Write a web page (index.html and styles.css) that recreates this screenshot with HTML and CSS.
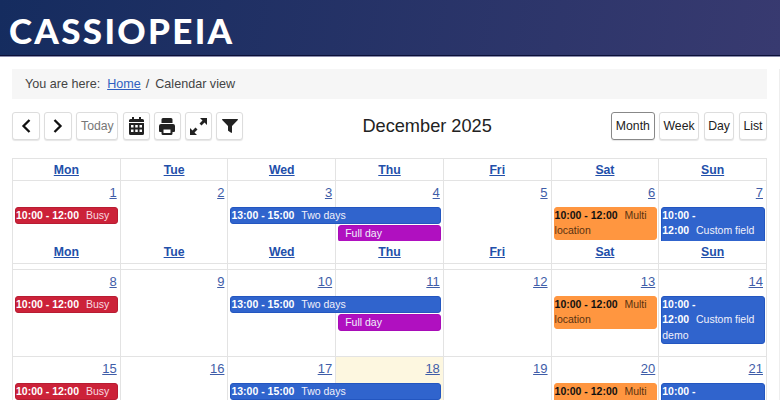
FILE: index.html
```html
<!DOCTYPE html>
<html lang="en">
<head>
  <meta charset="UTF-8">
  <meta name="viewport" content="width=device-width, initial-scale=1">
  <title>Calendar view | Cassiopeia</title>
  <link rel="stylesheet" href="styles.css">
</head>
<body>
  <div class="site-header">
    <a class="logo" href="#">CASSIOPEIA</a>
  </div>

  <div class="container">
    <div class="breadcrumb">
      <span class="here">You are here:</span>
      <a href="#">Home</a>
      <span class="sep">/</span>
      <span>Calendar view</span>
    </div>

    <div class="toolbar">
      <div class="btn-group">
        <button class="btn btn-nav" aria-label="Previous"><svg width="14" height="18" viewBox="0 0 14 18"><path d="M10.500 3 4.500 9l6 6" fill="none" stroke="#111" stroke-width="2.300"/></svg></button>
        <button class="btn btn-nav" aria-label="Next"><svg width="14" height="18" viewBox="0 0 14 18"><path d="M3.500 3l6 6-6 6" fill="none" stroke="#111" stroke-width="2.300"/></svg></button>
        <button class="btn btn-today">Today</button>
        <button class="btn btn-icon" aria-label="Jump to date"><svg width="15" height="18" viewBox="0 0 15 18"><path fill="#222" fill-rule="evenodd" d="M3 0h2v2h5V0h2v2h1.500A1.500 1.500 0 0 1 15 3.500V5H0V3.500A1.500 1.500 0 0 1 1.500 2H3zM0 6h15v10.500a1.500 1.500 0 0 1-1.500 1.500h-12A1.500 1.500 0 0 1 0 16.500zM2 8v2.500h2.500V8zm4.250 0v2.500h2.500V8zm4.250 0v2.500H13V8zM2 12.500V15h2.500v-2.500zm4.250 0V15h2.500v-2.500zm4.250 0V15H13v-2.500z"/></svg></button>
        <button class="btn btn-icon" aria-label="Print"><svg width="16" height="17" viewBox="0 0 16 17"><path fill="#222" fill-rule="evenodd" d="M2.500 1.500A1.500 1.500 0 0 1 4 0h8a1.500 1.500 0 0 1 1.500 1.500V5h-11zM2 6h12a2 2 0 0 1 2 2v5a1 1 0 0 1-1 1h-1.500v1.500A1.500 1.500 0 0 1 12 17H4a1.500 1.500 0 0 1-1.500-1.500V14H1a1 1 0 0 1-1-1V8a2 2 0 0 1 2-2zm2.500 5.500v3.500h7v-3.500z"/></svg></button>
        <button class="btn btn-icon" aria-label="Full screen"><svg width="17" height="17" viewBox="0 0 17 17"><path fill="#222" d="M10 0h7v7l-2.500-2.500-3 3-2-2 3-3zM0 17v-7l2.500 2.500 3-3 2 2-3 3L7 17z"/></svg></button>
        <button class="btn btn-icon" aria-label="Filter"><svg width="16" height="14" viewBox="0 0 16 14"><path fill="#222" d="M.700 0h14.600c.600 0 .900.700.500 1.100L10 7v6.300c0 .500-.500.800-.900.500l-2.600-1.900a.600.600 0 0 1-.500-.500V7L.200 1.100C-.200.700.100 0 .700 0z"/></svg></button>
      </div>
      <h2 class="title">December 2025</h2>
      <div class="btn-group view-group">
        <button class="btn active">Month</button>
        <button class="btn">Week</button>
        <button class="btn">Day</button>
        <button class="btn">List</button>
      </div>
    </div>

    <div class="calendar">
      <div class="week-head">
        <a href="#">Mon</a><a href="#">Tue</a><a href="#">Wed</a><a href="#">Thu</a><a href="#">Fri</a><a href="#">Sat</a><a href="#">Sun</a>
      </div>

      <div class="week week-clipped">
        <div class="day"><a href="#">1</a></div>
        <div class="day"><a href="#">2</a></div>
        <div class="day"><a href="#">3</a></div>
        <div class="day"><a href="#">4</a></div>
        <div class="day"><a href="#">5</a></div>
        <div class="day"><a href="#">6</a></div>
        <div class="day"><a href="#">7</a></div>
        <div class="event red col-1"><b>10:00 - 12:00</b>&nbsp;&nbsp;Busy</div>
        <div class="event blue col-3 span-2"><b>13:00 - 15:00</b>&nbsp;&nbsp;Two days</div>
        <div class="event purple col-4 second">Full day</div>
        <div class="event orange col-6"><b>10:00 - 12:00</b>&nbsp;&nbsp;Multi location</div>
        <div class="event blue col-7"><b>10:00 - 12:00</b>&nbsp;&nbsp;Custom field demo</div>
      </div>

      <div class="week-head">
        <a href="#">Mon</a><a href="#">Tue</a><a href="#">Wed</a><a href="#">Thu</a><a href="#">Fri</a><a href="#">Sat</a><a href="#">Sun</a>
      </div>
      <div class="week-gap">
        <i></i><i></i><i></i><i></i><i></i><i></i><i></i>
      </div>

      <div class="week">
        <div class="day"><a href="#">8</a></div>
        <div class="day"><a href="#">9</a></div>
        <div class="day"><a href="#">10</a></div>
        <div class="day"><a href="#">11</a></div>
        <div class="day"><a href="#">12</a></div>
        <div class="day"><a href="#">13</a></div>
        <div class="day"><a href="#">14</a></div>
        <div class="event red col-1"><b>10:00 - 12:00</b>&nbsp;&nbsp;Busy</div>
        <div class="event blue col-3 span-2"><b>13:00 - 15:00</b>&nbsp;&nbsp;Two days</div>
        <div class="event purple col-4 second">Full day</div>
        <div class="event orange col-6"><b>10:00 - 12:00</b>&nbsp;&nbsp;Multi location</div>
        <div class="event blue col-7"><b>10:00 - 12:00</b>&nbsp;&nbsp;Custom field demo</div>
      </div>

      <div class="week">
        <div class="day"><a href="#">15</a></div>
        <div class="day"><a href="#">16</a></div>
        <div class="day"><a href="#">17</a></div>
        <div class="day today"><a href="#">18</a></div>
        <div class="day"><a href="#">19</a></div>
        <div class="day"><a href="#">20</a></div>
        <div class="day"><a href="#">21</a></div>
        <div class="event red col-1"><b>10:00 - 12:00</b>&nbsp;&nbsp;Busy</div>
        <div class="event blue col-3 span-2"><b>13:00 - 15:00</b>&nbsp;&nbsp;Two days</div>
        <div class="event purple col-4 second">Full day</div>
        <div class="event orange col-6"><b>10:00 - 12:00</b>&nbsp;&nbsp;Multi location</div>
        <div class="event blue col-7"><b>10:00 - 12:00</b>&nbsp;&nbsp;Custom field demo</div>
      </div>
    </div>
  </div>
</body>
</html>
```

FILE: styles.css
```css
html {
  overflow: hidden;
}

body {
  font-family: "Liberation Sans", Arial, sans-serif;
  margin: 0;
  background-color: #fff;
  color: #222;
}

.site-header {
  height: 56px;
  padding: 4px 0 0 9px;
  box-sizing: border-box;
  display: flex;
  align-items: center;
  background: linear-gradient(100deg, #152c5f 0%, #383a70 100%);
  border-bottom: 1px solid #0b1038;
  box-shadow: 0 1px 0 #8a8cac;
}

.logo {
  font-family: Lato, "Liberation Sans", sans-serif;
  font-weight: 900;
  font-size: 35px;
  letter-spacing: 2.3px;
  color: #fff;
  text-decoration: none;
}

.container {
  margin-top: 13px;
  padding: 0 12px;
  border-right: 1px solid #eee;
}

.breadcrumb {
  height: 30px;
  padding-left: 13px;
  display: flex;
  align-items: center;
  gap: 5px;
  background-color: #f6f6f6;
  font-size: 12.6px;
  color: #444;
}

.breadcrumb .here {
  margin-right: 2px;
}

.breadcrumb .sep {
  margin-right: 1px;
}

.breadcrumb a {
  color: #2f5fc0;
}

.toolbar {
  height: 28px;
  margin-top: 13px;
  display: flex;
  justify-content: space-between;
  align-items: center;
}

.btn-group {
  display: flex;
  gap: 4.2px;
}

.view-group {
  gap: 4.5px;
}

.btn {
  height: 28px;
  padding: 0 3.5px;
  display: flex;
  align-items: center;
  justify-content: center;
  background-color: #fff;
  border: 1px solid #ddd;
  border-radius: 3px;
  box-shadow: 0 1px 1px rgba(0, 0, 0, 0.1);
  font-family: inherit;
  font-size: 12.25px;
  color: #222;
}

.btn.active {
  padding: 0 3.7px;
  border-color: #888;
}

.btn-nav {
  width: 28px;
}

.btn-today {
  width: 42px;
  color: #777;
}

.btn-icon {
  width: 27px;
  padding: 0;
}

.title {
  margin: 0;
  font-size: 18.2px;
  font-weight: normal;
}

.calendar {
  margin-top: 18px;
  border-left: 1px solid #e3e3e3;
  border-top: 1px solid #e3e3e3;
}

.week-head,
.week-gap,
.week {
  display: grid;
  grid-template-columns: repeat(7, 1fr);
}

.week-head {
  height: 21px;
  border-bottom: 1px solid #e3e3e3;
}

.week-clipped + .week-head {
  height: 22px;
}

.week-head a {
  border-right: 1px solid #e3e3e3;
  text-align: center;
  line-height: 22px;
  font-size: 12.25px;
  font-weight: bold;
  color: #224faa;
}

.week-gap {
  height: 5px;
  border-bottom: 1px solid #e3e3e3;
}

.week-gap i {
  border-right: 1px solid #e3e3e3;
}

.week {
  height: 86px;
  grid-template-rows: 26px 17.5px 18px 1fr;
  border-bottom: 1px solid #e3e3e3;
}

.week-clipped {
  height: 60px;
  overflow: hidden;
  border-bottom: none;
}

.day {
  grid-row: 1 / 5;
  padding: 3px 3px 0 0;
  border-right: 1px solid #e3e3e3;
  text-align: right;
  font-size: 13px;
  line-height: 18px;
}

.day:nth-child(1) { grid-column: 1; }
.day:nth-child(2) { grid-column: 2; }
.day:nth-child(3) { grid-column: 3; }
.day:nth-child(4) { grid-column: 4; }
.day:nth-child(5) { grid-column: 5; }
.day:nth-child(6) { grid-column: 6; }
.day:nth-child(7) { grid-column: 7; }

.day a {
  color: #3f5da8;
}

.today {
  background-color: #fdf7e0;
}

.event {
  grid-row: 2;
  align-self: start;
  margin: 0 2.5px 0 2px;
  border: 1px solid;
  border-radius: 3px;
  font-size: 10.5px;
  line-height: 15.4px;
  color: #f0f0fa;
}

.event.second {
  grid-row: 3;
  padding-left: 6px;
}

.col-1 { grid-column: 1; }
.col-3 { grid-column: 3; }
.col-4 { grid-column: 4; }
.col-6 { grid-column: 6; }
.col-7 { grid-column: 7; }
.span-2 { grid-column-end: span 2; }

.red {
  background-color: #cc2239;
  border-color: #b81c32;
  color: #f8dbe0;
}

.blue {
  background-color: #3064cd;
  border-color: #2356c0;
}

.purple {
  background-color: #b010c0;
  border-color: #a80cb8;
}

.orange {
  background-color: #ff9640;
  border-color: #ff9640;
  color: #5a3210;
}

.event b {
  margin-right: 1px;
  color: #fff;
}

.orange b {
  color: #111;
}
```
